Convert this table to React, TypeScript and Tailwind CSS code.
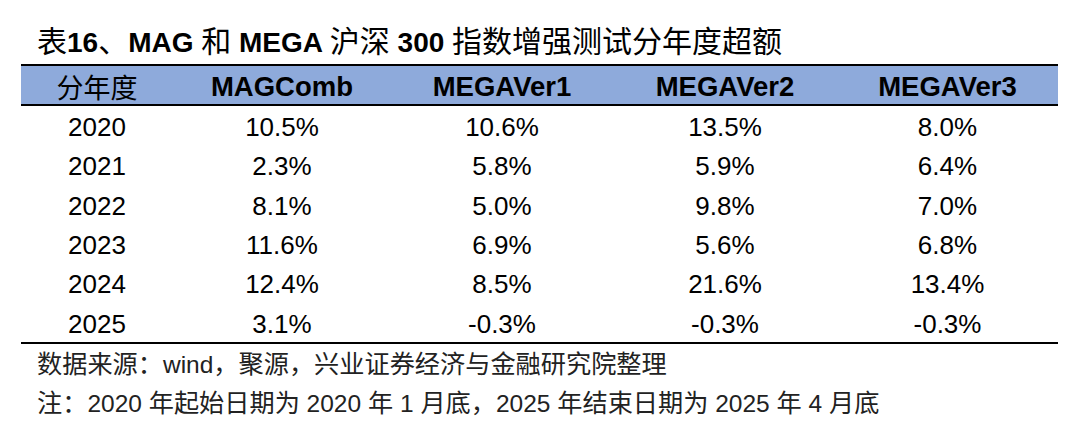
import React from "react";

const cols = ["MAGComb", "MEGAVer1", "MEGAVer2", "MEGAVer3"];
const rows: [string, string, string, string, string][] = [
  ["2020", "10.5%", "10.6%", "13.5%", "8.0%"],
  ["2021", "2.3%", "5.8%", "5.9%", "6.4%"],
  ["2022", "8.1%", "5.0%", "9.8%", "7.0%"],
  ["2023", "11.6%", "6.9%", "5.6%", "6.8%"],
  ["2024", "12.4%", "8.5%", "21.6%", "13.4%"],
  ["2025", "3.1%", "-0.3%", "-0.3%", "-0.3%"],
];

const latin = "font-['Liberation_Sans',Arial,sans-serif]";
const cjk = "font-['Noto_Sans_CJK_SC',sans-serif]";

function T({ children }: { children: React.ReactNode }) {
  return <span className={`${cjk} font-normal text-[30px]`}>{children}</span>;
}
function B({ children }: { children: React.ReactNode }) {
  return <span className={`${latin} font-bold text-[28px]`}>{children}</span>;
}
function F({ children }: { children: React.ReactNode }) {
  return <span className={`${cjk} text-[25.2px]`}>{children}</span>;
}
function L({ children }: { children: React.ReactNode }) {
  return <span className={`${latin} text-[24.5px]`}>{children}</span>;
}

export default function App() {
  return (
    <div className="w-[1080px] h-[448px] bg-white text-black overflow-hidden px-[21px]">
      <div className="h-[64px] pt-[19px] pl-[16px] whitespace-pre flex items-start">
        <div className="leading-[40px] h-[40px] flex items-baseline whitespace-pre">
          <T>表</T>
          <B>16</B>
          <T>、</T>
          <B>MAG </B>
          <T>和</T>
          <B> MEGA </B>
          <T>沪深</T>
          <B> 300 </B>
          <T>指数增强测试分年度超额</T>
        </div>
      </div>
      <div className="w-[1037px] border-t-2 border-black">
        <div className="grid grid-cols-[152px_218px_222px_224px_221px] h-[40px] bg-[#8eaadb] border-b-2 border-black items-center text-center">
          <div className={`${cjk} text-[27px] leading-[40px]`}>分年度</div>
          {cols.map((c) => (
            <div key={c} className={`${latin} font-bold text-[27.5px] leading-[40px] pt-[1px]`}>
              {c}
            </div>
          ))}
        </div>
        <div className="grid grid-rows-6 h-[238px] border-b-2 border-black">
          {rows.map((r) => (
            <div
              key={r[0]}
              className="grid grid-cols-[152px_218px_222px_224px_221px] items-center text-center pt-[3px]"
            >
              {r.map((v, i) => (
                <div key={i} className={`${latin} text-[26px] leading-[30px]`}>
                  {v}
                </div>
              ))}
            </div>
          ))}
        </div>
      </div>
      <div className="pl-[16px] text-[#222] whitespace-pre">
        <div className="h-[36px] leading-[36px] flex items-baseline mt-[0px]">
          <F>数据来源：</F>
          <L>wind</L>
          <F>，聚源，兴业证券经济与金融研究院整理</F>
        </div>
        <div className="h-[36px] leading-[36px] flex items-baseline mt-[3px]">
          <F>注：</F>
          <L>2020 </L>
          <F>年起始日期为</F>
          <L> 2020 </L>
          <F>年</F>
          <L> 1 </L>
          <F>月底，</F>
          <L>2025 </L>
          <F>年结束日期为</F>
          <L> 2025 </L>
          <F>年</F>
          <L> 4 </L>
          <F>月底</F>
        </div>
      </div>
    </div>
  );
}
